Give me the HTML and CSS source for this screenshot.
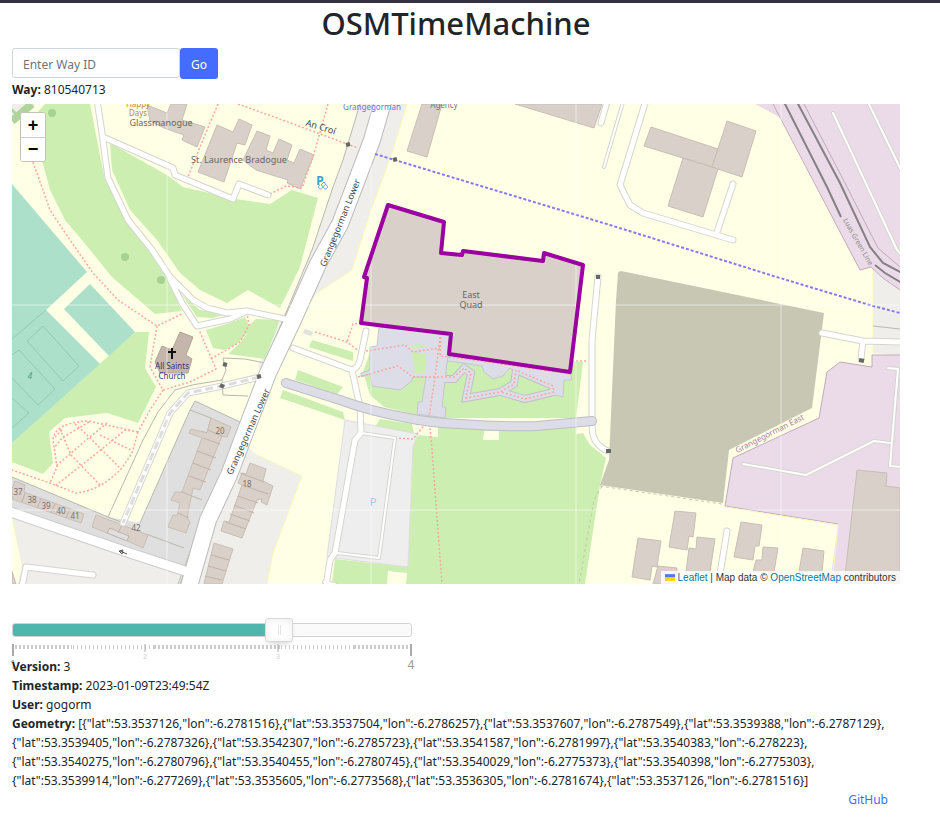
FILE: index.html
```html
<!DOCTYPE html>
<html lang="en">
<head>
<meta charset="utf-8">
<meta name="viewport" content="width=device-width, initial-scale=1">
<title>OSMTimeMachine</title>
<link rel="stylesheet" href="styles.css">
</head>
<body>
<main class="container">
  <h1>OSMTimeMachine</h1>
  <form class="way-form">
    <input class="way-input" type="text" placeholder="Enter Way ID" aria-label="Way ID">
    <button class="go" type="button">Go</button>
  </form>
  <p class="way"><b>Way:</b> 810540713</p>

  <section class="map" aria-label="Map">
    <svg class="map-canvas" viewBox="12 104 888 480" preserveAspectRatio="xMidYMid slice">
      <rect class="land" x="12" y="104" width="888" height="480"/>
      <!-- residential ground -->
      <g class="resid">
        <path d="M360 104H407L393 150L370 213L352 270L317 293L300 315L283 338L262 374L258 366L290 303L312 250L333 187L343 160Z"/>
        <path d="M240 440L257 455L302 476L273 553L267 584H190Z"/>
        <path d="M12 515L130 556L186 572V584H12Z"/>
        <path d="M873 269L883 278L900 290V355L873 353Z"/>
        <path d="M12 104H36L12 122Z"/>
      </g>
      <path class="yellowline" d="M407 104L393 150L370 213L352 270L317 293M257 455L302 476L273 553L267 584M873 267V353M12 515L20 560L24 570"/>
      <path class="land" d="M12 520L22 566L18 584H12Z"/>
      <path class="estate" d="M12 477L108 517L140 523L190 410L195 401L240 422L182 572L12 512Z"/>
      <path class="fence" d="M12 477L108 517L126 524M140 523L190 410L195 401L240 422M190 410L211 418L207 433L201 431M146 534L184 548M240 425L219 480L196 536L178 584M234 470L212 513L196 541L180 584"/>

      <!-- parks -->
      <g class="park">
        <path d="M45 104H90L97 140L105 180L125 215L145 243L165 275L182 311L155 314L112 277L82 240L65 220L50 190L42 160L35 115Z"/>
        <path d="M110 143L167 175L183 187L235 199L270 204L292 190L318 198L300 267L280 308L248 290L227 303L200 290L180 273L157 240L130 210L112 170Z"/>
        <path d="M182 295L200 310L230 313L213 318L197 317Z"/>
        <path d="M206 330L230 323L245 317L249 325L256 319L280 320L265 359L228 354L240 343L249 331L237 344L224 350L213 348Z"/>
        <path d="M135 332H149L145 368L156 387L138 423L107 413L65 418L49 432L53 463L43 474L12 462V443Z"/>
        <path d="M312 340L353 352V361L309 347Z"/>
        <path d="M298 370L343 387L337 394L295 380Z"/>
        <path d="M283 390L343 412L345 420L280 398Z"/>
        <path d="M370 352L363 372L370 395L384 407L430 418H576L583 362L540 360L450 340Z"/>
        <path d="M375 427L380 419L412 424L414 434L398 433Z"/>
        <path d="M438 425H577L576 434L583 433L590 445L606 458L600 485L585 584H332L335 559L408 567L413 443L420 434L438 437Z"/>
      </g>
      <path class="land" d="M413 426L438 427L437 437L418 435ZM484 431L499 431V440L483 440ZM388 571L407 573L406 584H387Z"/>
      <path class="hedge" d="M12 121L32 104M14 110L12 112"/>
      <g class="tree"><circle cx="125" cy="257" r="4"/><circle cx="161" cy="280" r="4"/><circle cx="52" cy="113" r="4"/></g>
      <path class="pitch" d="M12 184L87 272L46 310L100 364L12 443ZM90 284L135 332L109 356L64 309Z"/>
      <path class="pitchline" d="M46 310L12 339M43 326L79 366L63 381L27 341ZM12 355L19 350L55 389L38 405L12 378M12 398L29 413L12 428"/>

      <!-- industrial and brownfield -->
      <path class="indus" d="M755 104L781 118L860 270L871 267L883 278L900 290V104ZM872 355H900V584H830L838 524L725 506L733 458L819 418L827 372L840 362L872 367Z"/>
      <path class="indusline" d="M773 104L860 270L871 267L883 278L900 290M804 104L845 183L878 248L900 267M900 355H872V367L840 362L827 372L819 418L733 458L725 506L838 524"/>
      <path class="yellowline" d="M725 507L838 525L832 584"/>
      <path class="fence" d="M873 326L900 329"/>
      <path class="brown" d="M618 273Q619 271 621 271L824 313L812 408L729 450L723 503L600 485L609 460L616 300Z"/>
      <path class="hedge-dash" d="M600 486L722 504M602 486L594 500L579 584"/>

      <!-- plaza -->
      <path class="parking" d="M345 420L418 434L413 447L408 567L327 557Z"/>
      <path class="pathbed-edge" d="M443 379H454L464 368L471 373L466 398L500 392L514 384L516 370L553 386L554 392L525 399L501 392"/>
      <g class="plaza">
        <path d="M379 327L451 334L449 354L447 363L442 407H446L445 418L417 414L418 402H422L426 377H413L411 382L400 390L372 386L370 374L361 377V373L370 370V347L377 346Z"/>
        <path d="M449 354L570 371L572 380L564 380L563 397L552 394L551 384L519 373L510 368L503 376L493 379L484 372L482 366L474 365L464 363L447 361Z"/>
      </g>
      <path class="pathbed" d="M443 379H454L464 368L471 373L466 398L500 392L514 384L516 370L553 386L554 392L525 399L501 392"/>
      <path class="lawn" d="M412 352L426 354L425 373L415 374ZM410 346L420 344L428 346L413 349Z"/>

      <!-- buildings -->
      <g class="bldg">
        <path d="M147 105L167 113L171 104H187L182 120L205 127L197 147L182 140L184 135L164 128L150 121Z"/>
        <path d="M217 125L233 132L239 119L252 125L245 145L237 143L224 182L198 172Z"/>
        <path d="M257 131L270 136L266 150L273 153L279 139L292 145L287 160L294 163L300 149L314 155L300 189L287 183L288 180L256 170L243 160Z"/>
        <path d="M422 104H442L427 157L407 151Z"/>
        <path d="M515 104H602L594 128Z"/>
        <path d="M651 127L718 149L712 167L644 146Z"/>
        <path d="M727 121L756 131L742 177L712 167Z"/>
        <path d="M683 158L718 169L703 217L668 206Z"/>
        <path d="M857 470L887 473L886 486L900 488V584H844Z"/>
        <path d="M675 511L696 513L693 537L689 536L687 550L669 547Z"/>
        <path d="M638 538L661 541L657 567L652 566L650 580L632 577Z"/>
        <path d="M697 537L715 539L710 572H686L689 548L696 549Z"/>
        <path d="M658 566L677 568L676 584H653Z"/>
        <path d="M741 522L762 525L759 546L755 546L753 560L734 557Z"/>
        <path d="M763 547L778 548L774 572H753L756 560L762 560Z"/>
        <path d="M803 548L824 551L822 572H799Z"/>
        <path d="M211 418L231 427L227 437L222 436L200 490L193 488L187 518L190 522L186 533L168 527L173 515L177 516L180 503L171 500L175 492L182 492L202 438L189 433L191 429L207 433Z"/>
        <path d="M250 463L266 469L263 481L273 486L267 505L261 502L262 499L257 500L242 538L221 531L224 521L229 522L242 485L238 483L242 473L246 474Z"/>
        <path d="M214 543L233 549L222 584H204Z"/>
        <path d="M15 481L25 485L24 492L84 514L81 523L12 499V489Z"/>
        <path d="M96 515L122 525L148 535L143 548L130 542L92 527Z"/>
        <path d="M12 571L16 584H12Z"/>
      </g>
      <path class="estate" d="M110 528L129 536L127 541L107 533Z"/>
      <path class="bldgline" d="M203 438L220 444M197 451L216 458M193 463L211 470M189 476L206 482M182 492L202 500M178 513L189 518M242 485L268 494M240 473L264 482M238 496L258 503M234 505L254 513M230 514L250 521M226 522L246 529M211 555L229 560M208 566L226 571M205 576L222 580M25 493L22 502M41 499L37 508M55 504L51 513M70 509L66 518M122 525L118 533M110 528L129 536L127 541L107 533ZM208 430L222 436"/>
      <path class="church" d="M180 332L193 337L186 355L192 359L188 373H160L155 362L162 346L172 350Z"/>
      <path class="bldg" d="M388 205L444 222L441 253L462 255L463 251L543 261L544 253L583 265L570 372L449 354L451 334L361 323L367 278L364 277Z"/>

      <!-- service lines and fences -->
      <path class="fence" d="M265 363L245 359L223 358L226 370L222 380L223 395L248 396M222 380L192 385L175 390L158 412L143 440L108 517M360 104L343 160L333 187L312 250L290 303L265 363"/>

      <!-- foot ways -->
      <g class="foot">
        <path d="M33 162L50 210L70 240L93 273L118 300L157 326L182 314M157 326L150 367L163 390L150 410L138 432M163 390L190 382L216 369L199 330M211 359L240 342L249 325L247 313"/>
        <path d="M218 104L200 147L188 177M238 104L277 118L358 148M328 104L313 157L302 188L286 186L268 195"/>
        <path d="M138 432L88 421Q54 423 53 440L57 467L50 483M138 432L132 453L122 468Q100 491 76 493L50 483L12 470M75 424L85 433L120 468M107 423L85 441L56 466M89 422L62 438L54 448M60 429L71 455L100 485M138 432L125 430L97 453L55 486M100 435L131 450M62 430L54 438"/>
        <path d="M315 332L347 342L360 352L405 345L413 352L440 348M361 323L353 324L347 342M358 377L398 366L413 377H454L464 368L471 373L466 398L500 392L514 384L516 370M518 371L553 386L554 392L525 399L501 392M440 337L435 377L429 417L432 450L442 584M441 337L440 356L480 361L572 374M572 361H588M395 438L413 439L427 422"/>
      </g>

      <!-- roads -->
      <g class="case w7"><path d="M97 100L102 133L108 178L128 220L152 250L170 277L193 300L207 308L227 313L247 311L285 319M170 279L182 303L197 326L230 319L247 311M103 137L173 168L175 175L233 199L239 184L268 195"/>
        <path d="M646 100L620 185L630 205L643 213L733 240M733 184L717 232M608 98L601 123M822 333L863 341L902 342M863 341L861 358M598 277L592 340V423Q592 438 597 443Q602 449 608 451M727 531L718 586M293 348L352 370L360 407L361 433L355 440L335 553L330 560L326 586M352 370Q358 368 360 360L366 331M22 586L26 567L93 575"/></g>
      <path class="case w4" d="M623 102L604 167M833 113L897 250L902 255M867 100L902 172M743 464L806 475L874 441L890 443M888 368L898 369L890 466L902 467M361 433L395 438L379 558L337 553M324 582L335 584"/>
      <path class="case w7" d="M260 377L222 386L188 393L170 413L160 437L123 523"/>
      <path class="case w11" d="M5 510L60 529L130 553L188 572"/>
      <path class="case w18" d="M385 95L372 140L353 190L340 224L318 264L293 320L268 373L246 430L229 475L208 520L188 590"/>
      <path class="core w9" d="M5 510L60 529L130 553L188 572"/>
      <path class="core w16" d="M385 95L372 140L353 190L340 224L318 264L293 320L268 373L246 430L229 475L208 520L188 590"/>
      <g class="core w5"><path d="M97 100L102 133L108 178L128 220L152 250L170 277L193 300L207 308L227 313L247 311L285 319M170 279L182 303L197 326L230 319L247 311M103 137L173 168L175 175L233 199L239 184L268 195"/>
        <path d="M646 100L620 185L630 205L643 213L733 240M733 184L717 232M608 98L601 123M822 333L863 341L902 342M863 341L861 358M598 277L592 340V423Q592 438 597 443Q602 449 608 451M727 531L718 586M293 348L352 370L360 407L361 433L355 440L335 553L330 560L326 586M352 370Q358 368 360 360L366 331M22 586L26 567L93 575M260 377L222 386L188 393L170 413L160 437L123 523"/></g>
      <path class="core w2" d="M623 102L604 167M833 113L897 250L902 255M867 100L902 172M743 464L806 475L874 441L890 443M888 368L898 369L890 466L902 467M361 433L395 438L379 558L337 553M324 582L335 584"/>
      <path class="track" d="M260 377L222 386L188 393L170 413L160 437L123 523"/>
      <path class="mallcase" d="M286 383L340 400Q370 411 403 417Q430 423 460 424Q500 427 537 426L592 421"/>
      <path class="mall" d="M286 383L340 400Q370 411 403 417Q430 423 460 424Q500 427 537 426L592 421"/>
      <path class="case-stub" d="M304 331L312 334"/>
      <path class="rail" d="M784 102L827 187L841 217M797 102L840 183L870 247L883 263L902 273M875 265L885 273L902 283"/>
      <path class="cycle" d="M375 154L610 225L780 278L873 306L900 313"/>
      <path class="gate" d="M346 145L350 144M393 160L397 159M223 364L227 365M220 385L224 387M257 377L261 376M596 277H600M606 451H611M859 360L864 361"/>
      <path class="arrow" d="M120 551L127 554M119 551L123 550L122 554Z"/>
      <path class="cross" d="M172 348V359M168 352H176"/>

      <!-- tile seams -->
      <path class="seam" d="M167 104V584M371 104V584M576 104V584M781 104V584M12 305H900M12 510H900"/>

      <g class="label">
        <text class="shop" x="138" y="107">Happy</text><text class="shop" x="138" y="116">Days</text>
        <text x="161" y="126">Glassmanogue</text>
        <text x="239" y="163">St. Laurence Bradogue</text>
        <text class="street" transform="translate(320 130) rotate(17)">An Croí</text>
        <text class="blue" x="372" y="110">Grangegorman</text>
        <text class="office" x="444" y="108">Agency</text>
        <text class="street" transform="translate(343 224) rotate(-68)">Grangegorman Lower</text>
        <text class="street" transform="translate(251 433) rotate(-66)">Grangegorman Lower</text>
        <text x="471" y="298">East</text><text x="471" y="308">Quad</text>
        <text class="worship" x="172" y="369">All Saints</text><text class="worship" x="172" y="379">Church</text>
        <text class="ward" transform="translate(771 436) rotate(-27)">Grangegorman East</text>
        <text class="luas" transform="translate(856 243) rotate(60)">Luas Green Line</text>
        <text class="pitchno" x="30" y="379">4</text>
        <text class="num" x="220" y="434">20</text><text class="num" x="247" y="487">18</text>
        <text class="num" x="18" y="495">37</text><text class="num" x="32" y="503">38</text><text class="num" x="46" y="509">39</text><text class="num" x="61" y="514">40</text><text class="num" x="75" y="519">41</text><text class="num" x="136" y="531">42</text>
        <text class="park-p" x="320" y="185">P</text><text class="lot-p" x="373" y="506">P</text>
      </g>
      <path class="bike" d="M320 185a2 2 0 1 0 1 0M325 185a2 2 0 1 0 1 0M321 185L324 182L326 185"/>
      <path class="quad" d="M388 205L444 222L441 253L462 255L463 251L543 261L544 253L583 265L570 372L449 354L451 334L361 323L367 278L364 277Z"/>
    </svg>
    <div class="zoom">
      <button type="button" aria-label="Zoom in">+</button>
      <button type="button" aria-label="Zoom out">−</button>
    </div>
    <div class="attribution">
      <a href="#leaflet"><svg class="flag" width="10" height="7" viewBox="0 0 12 8"><path class="flag-top" d="M0 0h12v4H0z"/><path class="flag-low" d="M0 4h12v4H0z"/></svg> Leaflet</a> | Map data © <a href="#osm">OpenStreetMap</a> contributors
    </div>
  </section>

  <div class="slider">
    <input type="range" min="1" max="4" value="3" step="1" aria-label="Version">
    <svg class="pips" width="410" height="28" viewBox="-1 0 410 28">
      <path class="tick" stroke-dasharray="2 2" d="M3 3H60M142 3H268M342 3H398"/>
      <path class="tick" stroke-dasharray="1 3" d="M61 3H142M269 3H342"/>
      <path class="tick-mid" d="M133 0V8M266 0V8"/>
      <path class="tick-end" d="M1 0V12M399 0V12"/>
      <text class="sub" x="133" y="15">2</text><text class="sub" x="266" y="15">3</text>
      <text class="end" x="1" y="25">1</text><text class="end" x="399" y="25">4</text>
    </svg>
  </div>

  <div class="details">
    <p><b>Version:</b> 3</p>
    <p><b>Timestamp:</b> 2023-01-09T23:49:54Z</p>
    <p><b>User:</b> gogorm</p>
    <p><b>Geometry:</b> [{"lat":53.3537126,"lon":-6.2781516},{"lat":53.3537504,"lon":-6.2786257},{"lat":53.3537607,"lon":-6.2787549},{"lat":53.3539388,"lon":-6.2787129},<wbr>{"lat":53.3539405,"lon":-6.2787326},{"lat":53.3542307,"lon":-6.2785723},{"lat":53.3541587,"lon":-6.2781997},{"lat":53.3540383,"lon":-6.278223},<wbr>{"lat":53.3540275,"lon":-6.2780796},{"lat":53.3540455,"lon":-6.2780745},{"lat":53.3540029,"lon":-6.2775373},{"lat":53.3540398,"lon":-6.2775303},<wbr>{"lat":53.3539914,"lon":-6.277269},{"lat":53.3535605,"lon":-6.2773568},{"lat":53.3536305,"lon":-6.2781674},{"lat":53.3537126,"lon":-6.2781516}]</p>
  </div>
  <footer><a href="#github">GitHub</a></footer>
</main>
</body>
</html>
```
FILE: styles.css
```css
* { box-sizing: border-box; }
body {
  margin: 0;
  border-top: 3px solid #343241;
  background: #fff;
  color: #212529;
  font: 12px/19px "Noto Sans", "Open Sans", sans-serif;
}
.container { padding: 0 40px 0 12px; }
h1 { margin: 0; height: 45px; font-size: 31px; font-weight: 500; line-height: 41px; text-align: center; }
p { margin: 0; }
a { color: #446dff; text-decoration: none; }
.way-form { display: flex; align-items: flex-start; }
.way-input {
  width: 168px; height: 30px; padding: 2px 10px 0;
  border: 1px solid #ced4da; border-radius: 3px;
  color: #212529; font: inherit;
}
.way-input::placeholder { color: #6c757d; opacity: 1; }
.go {
  width: 38px; height: 31px; padding: 2px 0 0;
  border: 0; border-radius: 3px; background: #446dff; color: #fff; font: inherit;
}
.way { margin: 1px 0 5px; }

.map { position: relative; height: 480px; overflow: hidden; background: #ffffe5; }
.map-canvas { display: block; width: 100%; height: 100%; }
.map-canvas path { fill: none; }
.map-canvas .land, .land { fill: #ffffe5; }
.map-canvas .resid path { fill: #f0eeea; }
.map-canvas .estate { fill: #dfdfdf; }
.yellowline { stroke: #f8f8b8; stroke-width: 1; }
.fence { stroke: #b8b8ae; stroke-width: 1; }
.map-canvas .park path, .map-canvas .lawn { fill: #cdeeb1; }
.hedge { stroke: #b0d49c; stroke-width: 8; }
.tree { fill: #a5d394; }
.map-canvas .pitch { fill: #ace0ca; }
.pitchline { stroke: #8fcbb2; }
.map-canvas .indus { fill: #ebdbe8; }
.indusline { stroke: #c0aabb; }
.map-canvas .brown { fill: #c7c7b4; }
.hedge-dash { stroke: #c4c9a4; stroke-dasharray: 3 3; }
.map-canvas .parking { fill: #eee; stroke: #ddd; }
.map-canvas .plaza path { fill: #dddde8; stroke: #c6c6d2; }
.pathbed { stroke: #dddde8; stroke-width: 6; }
.pathbed-edge { stroke: #c0c0cb; stroke-width: 8; }
.map-canvas .bldg path, .map-canvas path.bldg { fill: #d9d0c9; stroke: #c9beb4; }
.bldgline { stroke: #c0b3a8; }
.map-canvas .church { fill: #c4b6ab; stroke: #b2a497; }
.foot { stroke: #faa8a0; stroke-width: 1.5; stroke-dasharray: 2 2; }
.case, .core { fill: none; stroke-linejoin: round; stroke-linecap: round; }
.case { stroke: #d5d5d0; }
.core { stroke: #fff; }
.w18 { stroke-width: 18; stroke: #bbb; }
.w16 { stroke-width: 16; }
.w11 { stroke-width: 11; stroke: #ccc; }
.w9 { stroke-width: 9; }
.w7 { stroke-width: 7; }
.w5 { stroke-width: 5; }
.w4 { stroke-width: 4; }
.w2 { stroke-width: 2; }
.track { stroke: #ddd; stroke-width: 3; stroke-dasharray: 8 4; }
.mallcase { stroke: #bdbdc5; stroke-width: 10; stroke-linecap: round; }
.mall { stroke: #dddde8; stroke-width: 8; stroke-linecap: round; }
.case-stub { stroke: #e2e2df; stroke-width: 5; }
.rail { stroke: #858085; stroke-width: 2; }
.cycle { stroke: #8878f5; stroke-width: 2; stroke-dasharray: 3 2; }
.gate { stroke: #666; stroke-width: 4; }
.arrow { stroke: #555; stroke-width: 1; }
.cross { stroke: #111; stroke-width: 2; }
.seam { stroke: #fff; stroke-opacity: .55; stroke-width: 1; }
.label { font: 8px "Noto Sans", sans-serif; fill: #666; text-anchor: middle; }
.label text:not([class]) { font-size: 9px; }
.label .street { fill: #444; font-size: 9px; }
.shop { fill: #bd8a43; }
.blue { fill: #5d78ef; }
.office { fill: #6374ad; }
.worship { fill: #38387b; }
.ward { fill: #a6829f; }
.luas { fill: #888; font-size: 7px; }
.pitchno { fill: #4f9b80; font-style: italic; }
.num { fill: #77716c; }
.park-p { fill: #3f9bda; font-size: 12px; font-weight: 700; }
.lot-p { fill: #9bcdea; font-size: 11px; }
.bike { stroke: #58aade; }
.quad { stroke: #9b00a0; stroke-width: 4; stroke-linejoin: round; }

.zoom {
  position: absolute; left: 8px; top: 8px;
  border: 1px solid #c2c4b4; border-radius: 3px; background: #fff; overflow: hidden;
}
.zoom button {
  display: block; width: 24px; height: 24px; padding: 0;
  border: 0; background: #fff; color: #000;
  font: bold 18px/23px "Liberation Sans", sans-serif;
}
.zoom button + button { border-top: 1px solid #ccc; }
.attribution {
  position: absolute; right: 0; bottom: 0; padding: 0 4px;
  background: rgba(255, 255, 255, .8); color: #333;
  font: 10px/13px "Liberation Sans", sans-serif;
}
.attribution a { color: #0078a8; }
.flag-top { fill: #4c7be1; }
.flag-low { fill: #ffd500; }

.slider {
  position: relative; width: 400px; height: 14px; margin: 39px 0 20px;
  border: 1px solid #d3d3d3; border-radius: 3px;
  background: linear-gradient(to right, #4fb6ad 66%, #fafafa 66%);
}
.slider input {
  position: absolute; left: -15px; top: -6px; width: 428px; height: 24px; margin: 0;
  appearance: none; background: transparent; z-index: 1;
}
.slider input::-webkit-slider-thumb {
  appearance: none; width: 28px; height: 24px;
  border: 1px solid #d9d9d9; border-radius: 3px;
  background:
    linear-gradient(#e4e4e4, #e4e4e4) 12px 6px / 1px 10px no-repeat,
    linear-gradient(#e4e4e4, #e4e4e4) 14px 6px / 1px 10px no-repeat,
    #fff;
  box-shadow: inset 0 0 1px #fff, inset 0 1px 7px #ebebeb, 0 3px 6px -3px #bbb;
}
.pips { position: absolute; left: -2px; top: 20px; overflow: visible; }
.tick { stroke: #ccc; stroke-width: 4; }
.tick-mid { stroke: #aaa; stroke-width: 1; }
.tick-end { stroke: #aaa; stroke-width: 2; }
.pips text { text-anchor: middle; }
.sub { fill: #ccc; font-size: 7px; }
.end { fill: #999; font-size: 12px; }
.details { position: relative; overflow-wrap: anywhere; }
footer { padding-right: 12px; text-align: right; }
```
